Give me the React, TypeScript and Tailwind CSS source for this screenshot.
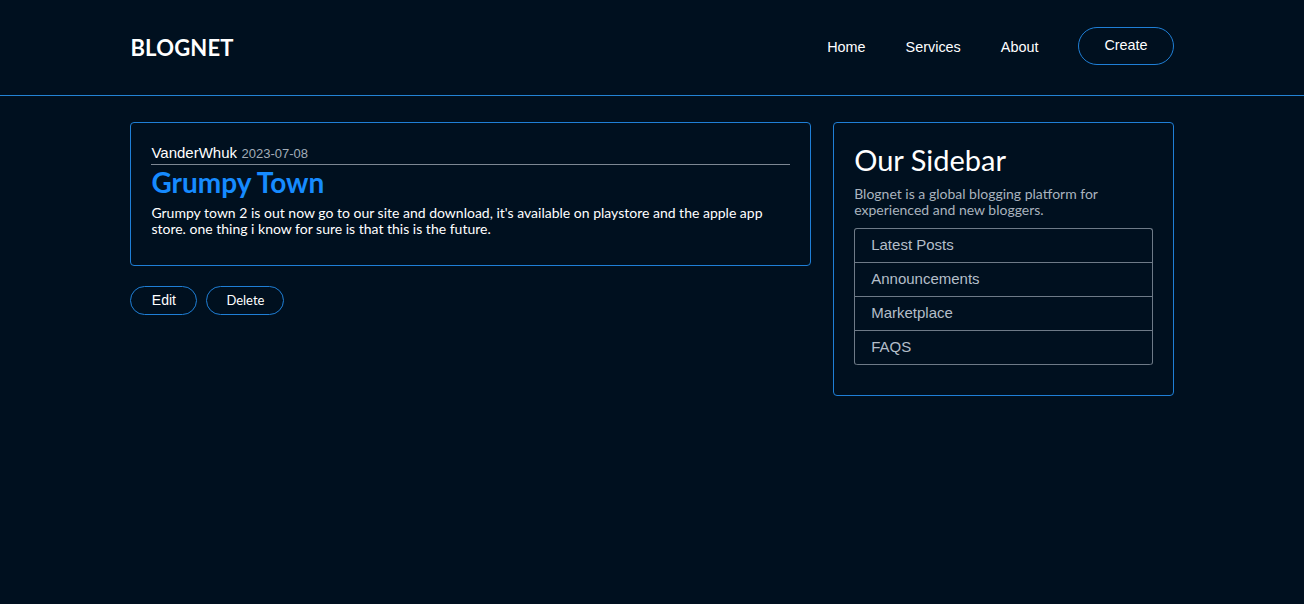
const posts = [
  {
    id: 1,
    author: 'VanderWhuk',
    date: '2023-07-08',
    title: 'Grumpy Town',
    body: "Grumpy town 2 is out now go to our site and download, it's available on playstore and the apple app store. one thing i know for sure is that this is the future.",
  },
]

const links = ['Latest Posts', 'Announcements', 'Marketplace', 'FAQS']

const trebuchet = 'font-["Trebuchet_MS",Lato,"Noto_Sans",sans-serif]'

export default function App() {
  return (
    <div className="min-h-[604px] bg-[#00101f] text-[#f2f5f8] font-['Liberation_Sans',Arial,sans-serif]">
      <header className="h-[96px] border-b border-[#2383d4]">
        <div className="w-4/5 mx-auto h-full flex items-center justify-between">
          <a href="#" className={`${trebuchet} font-bold text-[22px] tracking-[0.2px] text-white`}>
            BLOGNET
          </a>
          <nav className="flex items-center gap-10 text-[14.4px] text-white">
            <a href="#">Home</a>
            <a href="#">Services</a>
            <a href="#">About</a>
            <a
              href="#"
              className="h-[38px] px-[25px] flex items-center rounded-full border border-[#1f7fd6] -mt-[4px]"
            >
              Create
            </a>
          </nav>
        </div>
      </header>

      <main className="w-4/5 mx-auto mt-[26px] grid grid-cols-[2fr_1fr] gap-[22px] items-start">
        <section>
          {posts.map((p) => (
            <div key={p.id}>
              <article className="border border-[#1f7fd6] rounded-[4px] px-5 pt-[20px] pb-[28px]">
                <div className="border-b border-[#7d8793] h-[22px] leading-[20px]">
                  <span className="text-[15px] text-white">{p.author}</span>{' '}
                  <span className="text-[13px] text-[#a2acb7]">{p.date}</span>
                </div>
                <h2 className={`${trebuchet} font-bold text-[28px] leading-[33px] text-[#168bff] mt-px`}>
                  {p.title}
                </h2>
                <p className={`${trebuchet} text-[14px] leading-[16px] mt-[6px] text-white`}>{p.body}</p>
              </article>
              <div className="flex gap-[9px] mt-[20px]">
                <button className="h-[29px] w-[67px] rounded-full border border-[#1f7fd6] text-[14px] text-white">
                  Edit
                </button>
                <button className={`${trebuchet} h-[29px] w-[78px] rounded-full border border-[#1f7fd6] text-[13px] text-white`}>
                  Delete
                </button>
              </div>
            </div>
          ))}
        </section>

        <aside className="border border-[#1f7fd6] rounded-[4px] px-5 pt-[19px] pb-[30px]">
          <h3 className={`${trebuchet} text-[29px] leading-[36px] text-white`}>Our Sidebar</h3>
          <p className={`${trebuchet} text-[14px] leading-[16px] text-[#a9b3be] mt-[8px]`}>
            Blognet is a global blogging platform for experienced and new bloggers.
          </p>
          <ul className="mt-[10px] border-x border-t border-[#6e7a87] rounded-[3px]">
            {links.map((l) => (
              <li
                key={l}
                className="h-[34px] flex items-center pl-4 text-[15px] text-[#b4bec9] border-b border-[#6e7a87] last:rounded-b-[3px]"
              >
                {l}
              </li>
            ))}
          </ul>
        </aside>
      </main>
    </div>
  )
}
